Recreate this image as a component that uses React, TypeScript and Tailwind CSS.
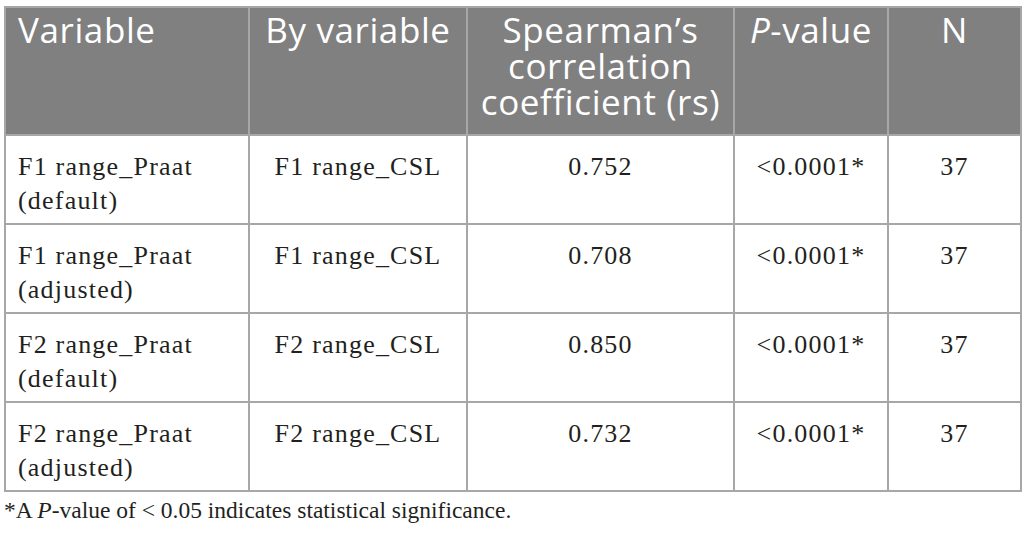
// Spearman correlation table: Praat vs CSL formant ranges.

const rows = [
  { variable: ['F1 range_Praat', '(default)'], by: 'F1 range_CSL', rs: '0.752' },
  { variable: ['F1 range_Praat', '(adjusted)'], by: 'F1 range_CSL', rs: '0.708' },
  { variable: ['F2 range_Praat', '(default)'], by: 'F2 range_CSL', rs: '0.850' },
  { variable: ['F2 range_Praat', '(adjusted)'], by: 'F2 range_CSL', rs: '0.732' },
];

const th = 'border-2 border-[#a7a7a7] align-top pt-[4px] px-1 font-normal';
const td = 'border-2 border-[#a7a7a7] align-top pt-[14px] px-3';

export default function App() {
  return (
    <div className="w-[1028px] h-[545px] bg-white pt-[6px] pl-[4px] overflow-hidden">
      <table className="border-collapse table-fixed w-[1018px]">
        <colgroup>
          <col className="w-[244px]" />
          <col className="w-[218px]" />
          <col className="w-[267px]" />
          <col className="w-[154px]" />
          <col className="w-[133px]" />
        </colgroup>
        <thead>
          <tr className="h-[128px] bg-[#808080] text-white text-[35px] leading-[36px] tracking-[0.6px] font-['Open_Sans',sans-serif]">
            <th className={th + ' text-left pl-[12px]'}>Variable</th>
            <th className={th + ' text-center'}>By variable</th>
            <th className={th + ' text-center'}>Spearman’s correlation coefficient (rs)</th>
            <th className={th + ' text-center'}>
              <i>P</i>-value
            </th>
            <th className={th + ' text-center'}>N</th>
          </tr>
        </thead>
        <tbody className="text-[#231f20] text-[26px] leading-[34px] tracking-[1.2px] font-['Liberation_Serif',serif]">
          {rows.map((r) => (
            <tr key={r.variable.join(' ') + r.rs} className="h-[89px]">
              <td className={td + ' text-left pl-[12px]'}>
                {r.variable[0]}
                <br />
                {r.variable[1]}
              </td>
              <td className={td + ' text-center'}>{r.by}</td>
              <td className={td + ' text-center'}>{r.rs}</td>
              <td className={td + ' text-center'}>&lt;0.0001*</td>
              <td className={td + ' text-center'}>37</td>
            </tr>
          ))}
        </tbody>
      </table>
      <p className="mt-[3px] text-[#231f20] text-[23.5px] leading-[30px] font-['Liberation_Serif',serif]">
        *A <i>P</i>-value of &lt; 0.05 indicates statistical significance.
      </p>
    </div>
  );
}
